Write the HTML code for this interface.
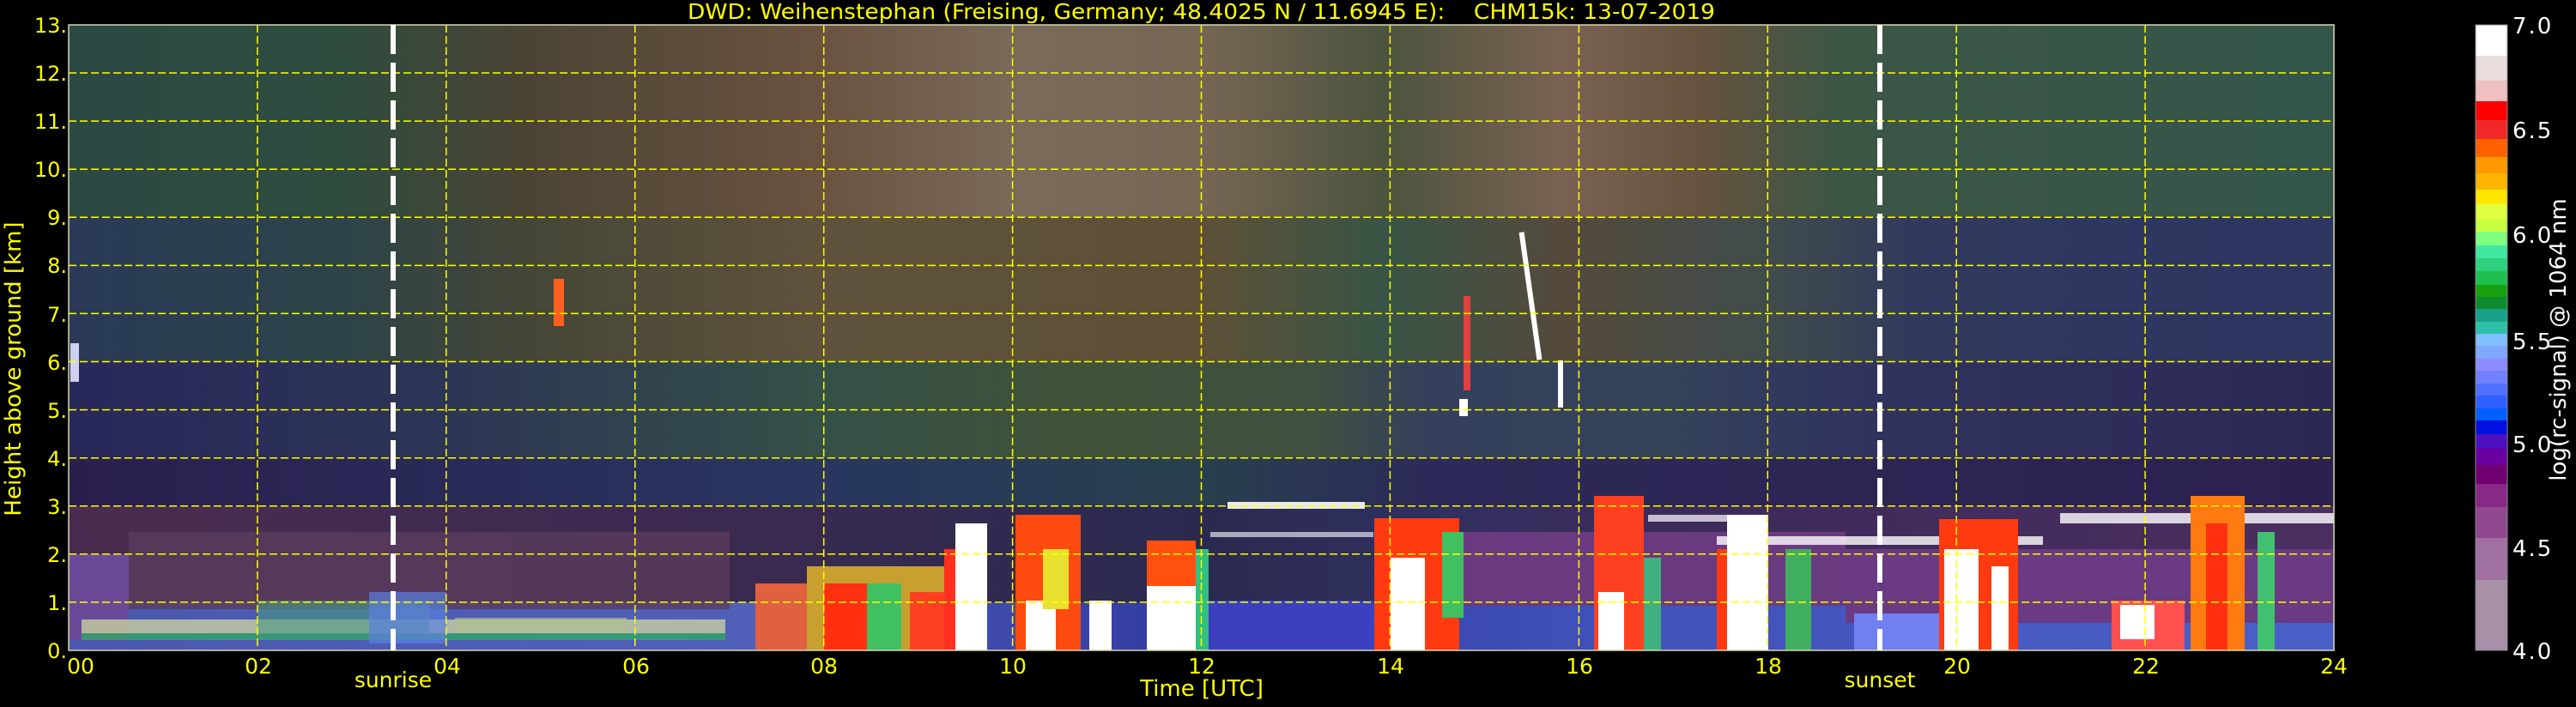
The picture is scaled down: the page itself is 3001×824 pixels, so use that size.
<!DOCTYPE html>
<html><head><meta charset="utf-8"><style>
html,body{margin:0;padding:0;background:#000;width:3001px;height:824px;overflow:hidden}
svg{display:block}
text{font-family:"DejaVu Sans","Liberation Sans",sans-serif;fill:#ffff00}
</style></head><body>
<svg width="3001" height="824" viewBox="0 0 3001 824" xmlns="http://www.w3.org/2000/svg">
<defs>
<linearGradient id="rA" gradientUnits="userSpaceOnUse" x1="80" y1="0" x2="2719" y2="0">
<stop offset="0" stop-color="#2c4a44"/><stop offset=".12" stop-color="#2e4c3e"/><stop offset=".2" stop-color="#4a4434"/><stop offset=".33" stop-color="#6a5240"/><stop offset=".42" stop-color="#7a6a5a"/><stop offset=".5" stop-color="#766654"/><stop offset=".58" stop-color="#4c543e"/><stop offset=".66" stop-color="#7a6252"/><stop offset=".72" stop-color="#66523e"/><stop offset=".78" stop-color="#3c5646"/><stop offset="1" stop-color="#34564a"/></linearGradient>
<linearGradient id="rB" gradientUnits="userSpaceOnUse" x1="80" y1="0" x2="2719" y2="0">
<stop offset="0" stop-color="#2a3a58"/><stop offset=".12" stop-color="#2c4448"/><stop offset=".2" stop-color="#444636"/><stop offset=".33" stop-color="#5e523c"/><stop offset=".5" stop-color="#5e5036"/><stop offset=".58" stop-color="#385446"/><stop offset=".66" stop-color="#544a3c"/><stop offset=".75" stop-color="#404c4c"/><stop offset=".82" stop-color="#30385e"/><stop offset="1" stop-color="#2c3660"/></linearGradient>
<linearGradient id="rC" gradientUnits="userSpaceOnUse" x1="80" y1="0" x2="2719" y2="0">
<stop offset="0" stop-color="#28285a"/><stop offset=".16" stop-color="#2c3456"/><stop offset=".33" stop-color="#345048"/><stop offset=".45" stop-color="#405238"/><stop offset=".55" stop-color="#3e5040"/><stop offset=".6" stop-color="#34405c"/><stop offset=".7" stop-color="#34445a"/><stop offset=".78" stop-color="#30345e"/><stop offset="1" stop-color="#2c2856"/></linearGradient>
<linearGradient id="rD" gradientUnits="userSpaceOnUse" x1="80" y1="0" x2="2719" y2="0">
<stop offset="0" stop-color="#2a1e4e"/><stop offset=".33" stop-color="#283660"/><stop offset=".5" stop-color="#28404e"/><stop offset=".6" stop-color="#2c2a58"/><stop offset="1" stop-color="#2c2050"/></linearGradient>
<linearGradient id="rE" gradientUnits="userSpaceOnUse" x1="80" y1="0" x2="2719" y2="0">
<stop offset="0" stop-color="#4a2c50"/><stop offset=".3" stop-color="#3a2a50"/><stop offset=".5" stop-color="#2a2a50"/><stop offset=".6" stop-color="#303060"/><stop offset=".7" stop-color="#3c2a5a"/><stop offset="1" stop-color="#4a2e60"/></linearGradient>
<linearGradient id="rF" gradientUnits="userSpaceOnUse" x1="80" y1="0" x2="2719" y2="0">
<stop offset="0" stop-color="#4a58b0"/><stop offset=".3" stop-color="#5060b8"/><stop offset=".5" stop-color="#3038a0"/><stop offset=".66" stop-color="#4050b8"/><stop offset="1" stop-color="#4a60c8"/></linearGradient>
</defs>

<rect x="80" y="29" width="2639" height="224" fill="url(#rA)"/>
<rect x="80" y="253" width="2639" height="169" fill="url(#rB)"/>
<rect x="80" y="422" width="2639" height="112" fill="url(#rC)"/>
<rect x="80" y="534" width="2639" height="56" fill="url(#rD)"/>
<rect x="80" y="590" width="2639" height="168" fill="url(#rE)"/>
<rect x="80" y="702" width="2639" height="56" fill="url(#rF)"/>

<rect x="150" y="620" width="700" height="90" fill="#5a3c5c" opacity=".8"/>
<rect x="80" y="646" width="70" height="100" fill="#6a4a98"/>
<rect x="95" y="722" width="750" height="16" fill="#c8d0a0" opacity=".8"/>
<rect x="95" y="738" width="750" height="8" fill="#30b060" opacity=".7"/>
<rect x="300" y="700" width="200" height="40" fill="#4a9a80" opacity=".6"/>
<rect x="430" y="690" width="90" height="60" fill="#5a80e0" opacity=".7"/>
<rect x="530" y="720" width="200" height="18" fill="#b0c090" opacity=".7"/>
<rect x="1630" y="620" width="520" height="86" fill="#6a3a80"/>
<rect x="2150" y="640" width="569" height="86" fill="#6a3a82"/>
<rect x="1400" y="700" width="200" height="58" fill="#3a40c0"/>
<rect x="1430" y="585" width="160" height="8" fill="#ffffff" opacity=".9"/>
<rect x="1410" y="620" width="190" height="6" fill="#ffffff" opacity=".6"/>
<rect x="2000" y="625" width="380" height="10" fill="#ffffff" opacity=".8"/>
<rect x="1920" y="600" width="100" height="8" fill="#ffffff" opacity=".7"/>
<rect x="2400" y="598" width="319" height="12" fill="#ffffff" opacity=".8"/>
<rect x="2160" y="715" width="120" height="43" fill="#7080f0"/>

<rect x="880" y="680" width="60" height="78" fill="#e06040"/>
<rect x="940" y="660" width="170" height="98" fill="#c8a030"/>
<rect x="960" y="680" width="50" height="78" fill="#ff3010"/>
<rect x="1010" y="680" width="40" height="78" fill="#40c060"/>
<rect x="1060" y="690" width="40" height="68" fill="#ff4020"/>
<rect x="1113" y="610" width="37" height="148" fill="#ffffff"/>
<rect x="1100" y="640" width="13" height="118" fill="#ff3020"/>
<rect x="1183" y="600" width="76" height="158" fill="#ff4a10"/>
<rect x="1195" y="700" width="35" height="58" fill="#ffffff"/>
<rect x="1215" y="640" width="30" height="70" fill="#e8e030"/>
<rect x="1269" y="700" width="26" height="58" fill="#ffffff"/>
<rect x="1336" y="630" width="57" height="53" fill="#ff5010"/>
<rect x="1336" y="683" width="57" height="75" fill="#ffffff"/>
<rect x="1393" y="640" width="15" height="118" fill="#30c080"/>
<rect x="1601" y="604" width="99" height="154" fill="#ff3a10"/>
<rect x="1620" y="650" width="40" height="108" fill="#ffffff"/>
<rect x="1680" y="620" width="25" height="100" fill="#40c060"/>
<rect x="1857" y="578" width="58" height="180" fill="#ff4020"/>
<rect x="1862" y="690" width="30" height="68" fill="#ffffff"/>
<rect x="1915" y="650" width="20" height="108" fill="#40b080"/>
<rect x="2012" y="600" width="48" height="158" fill="#ffffff"/>
<rect x="2000" y="640" width="12" height="118" fill="#ff3a10"/>
<rect x="2080" y="640" width="30" height="118" fill="#40b060"/>
<rect x="2259" y="605" width="92" height="153" fill="#ff3a10"/>
<rect x="2265" y="640" width="40" height="118" fill="#ffffff"/>
<rect x="2320" y="660" width="20" height="98" fill="#ffffff"/>
<rect x="2460" y="700" width="85" height="58" fill="#ff5050"/>
<rect x="2470" y="705" width="40" height="40" fill="#ffffff"/>
<rect x="2552" y="578" width="63" height="180" fill="#ff7a10"/>
<rect x="2570" y="610" width="25" height="148" fill="#ff3010"/>
<rect x="2630" y="620" width="20" height="138" fill="#40c070"/>

<rect x="645" y="325" width="12" height="55" fill="#ff6020"/>
<rect x="1705" y="345" width="8" height="110" fill="#e04040"/>
<rect x="1700" y="465" width="10" height="20" fill="#ffffff"/>
<rect x="1780" y="270" width="6" height="150" fill="#ffffff" transform="rotate(-8 1783 345)"/>
<rect x="1815" y="420" width="6" height="55" fill="#ffffff"/>
<rect x="82" y="400" width="10" height="45" fill="#d0d0f0"/>

<g stroke="#ffff00" stroke-width="1.5" stroke-dasharray="9 4" fill="none">
<line x1="80" y1="701.9" x2="2719" y2="701.9"/><line x1="80" y1="645.8" x2="2719" y2="645.8"/>
<line x1="80" y1="589.8" x2="2719" y2="589.8"/><line x1="80" y1="533.7" x2="2719" y2="533.7"/>
<line x1="80" y1="477.6" x2="2719" y2="477.6"/><line x1="80" y1="421.5" x2="2719" y2="421.5"/>
<line x1="80" y1="365.4" x2="2719" y2="365.4"/><line x1="80" y1="309.4" x2="2719" y2="309.4"/>
<line x1="80" y1="253.3" x2="2719" y2="253.3"/><line x1="80" y1="197.2" x2="2719" y2="197.2"/>
<line x1="80" y1="141.1" x2="2719" y2="141.1"/><line x1="80" y1="85" x2="2719" y2="85"/>
<line x1="299.9" y1="29" x2="299.9" y2="758"/><line x1="519.8" y1="29" x2="519.8" y2="758"/>
<line x1="739.8" y1="29" x2="739.8" y2="758"/><line x1="959.7" y1="29" x2="959.7" y2="758"/>
<line x1="1179.6" y1="29" x2="1179.6" y2="758"/><line x1="1399.5" y1="29" x2="1399.5" y2="758"/>
<line x1="1619.4" y1="29" x2="1619.4" y2="758"/><line x1="1839.4" y1="29" x2="1839.4" y2="758"/>
<line x1="2059.3" y1="29" x2="2059.3" y2="758"/><line x1="2279.2" y1="29" x2="2279.2" y2="758"/>
<line x1="2499.1" y1="29" x2="2499.1" y2="758"/>
</g>
<rect x="80" y="29" width="2639" height="729" fill="none" stroke="#d8d8b0" stroke-width="1.5"/>
<g stroke="#ffffff" stroke-width="6" stroke-dasharray="34 10">
<line x1="458" y1="29" x2="458" y2="758"/><line x1="2190" y1="29" x2="2190" y2="758"/>
</g>

<text x="801" y="22" font-size="25" textLength="1197" lengthAdjust="spacingAndGlyphs" xml:space="preserve">DWD: Weihenstephan (Freising, Germany; 48.4025 N / 11.6945 E):    CHM15k: 13-07-2019</text>

<g font-size="24" text-anchor="end">
<text x="78" y="767">0.</text><text x="78" y="711">1.</text><text x="78" y="655">2.</text>
<text x="78" y="599">3.</text><text x="78" y="543">4.</text><text x="78" y="487">5.</text>
<text x="78" y="431">6.</text><text x="78" y="375">7.</text><text x="78" y="318">8.</text>
<text x="78" y="262">9.</text><text x="78" y="206">10.</text><text x="78" y="150">11.</text>
<text x="78" y="94">12.</text><text x="78" y="38">13.</text>
</g>
<text transform="translate(24,430) rotate(-90)" font-size="26" text-anchor="middle">Height above ground [km]</text>

<g font-size="25" text-anchor="middle">
<text x="94" y="785">00</text><text x="301" y="785">02</text><text x="521" y="785">04</text>
<text x="741" y="785">06</text><text x="960" y="785">08</text><text x="1180" y="785">10</text>
<text x="1400" y="785">12</text><text x="1620" y="785">14</text><text x="1840" y="785">16</text>
<text x="2060" y="785">18</text><text x="2280" y="785">20</text><text x="2500" y="785">22</text>
<text x="2719" y="785">24</text>
</g>
<text x="458" y="801" font-size="25" text-anchor="middle">sunrise</text>
<text x="2190" y="801" font-size="25" text-anchor="middle">sunset</text>
<text x="1400" y="811" font-size="26" text-anchor="middle">Time [UTC]</text>

<g>
<rect x="2884" y="29" width="37" height="36" fill="#ffffff"/>
<rect x="2884" y="65" width="37" height="29" fill="#e8dcdc"/>
<rect x="2884" y="94" width="37" height="24" fill="#f0c0c0"/>
<rect x="2884" y="118" width="37" height="22" fill="#ff0000"/>
<rect x="2884" y="140" width="37" height="22" fill="#f02828"/>
<rect x="2884" y="162" width="37" height="21" fill="#ff6000"/>
<rect x="2884" y="183" width="37" height="19" fill="#ff9a00"/>
<rect x="2884" y="202" width="37" height="19" fill="#ffb400"/>
<rect x="2884" y="221" width="37" height="17" fill="#ffe600"/>
<rect x="2884" y="238" width="37" height="17" fill="#e0ff40"/>
<rect x="2884" y="255" width="37" height="15" fill="#c8ff40"/>
<rect x="2884" y="270" width="37" height="16" fill="#80ff80"/>
<rect x="2884" y="286" width="37" height="15" fill="#40e8a0"/>
<rect x="2884" y="301" width="37" height="15" fill="#30d080"/>
<rect x="2884" y="316" width="37" height="16" fill="#20c050"/>
<rect x="2884" y="332" width="37" height="14" fill="#18a010"/>
<rect x="2884" y="346" width="37" height="14" fill="#108a30"/>
<rect x="2884" y="360" width="37" height="15" fill="#18a088"/>
<rect x="2884" y="375" width="37" height="14" fill="#30c0a8"/>
<rect x="2884" y="389" width="37" height="14" fill="#80c0ff"/>
<rect x="2884" y="403" width="37" height="15" fill="#80a8ff"/>
<rect x="2884" y="418" width="37" height="14" fill="#8c8cff"/>
<rect x="2884" y="432" width="37" height="15" fill="#7080ff"/>
<rect x="2884" y="447" width="37" height="14" fill="#5070ff"/>
<rect x="2884" y="461" width="37" height="15" fill="#3060ff"/>
<rect x="2884" y="476" width="37" height="14" fill="#0060ff"/>
<rect x="2884" y="490" width="37" height="16" fill="#0010e0"/>
<rect x="2884" y="506" width="37" height="17" fill="#4a10c0"/>
<rect x="2884" y="523" width="37" height="19" fill="#6a00a0"/>
<rect x="2884" y="542" width="37" height="22" fill="#700070"/>
<rect x="2884" y="564" width="37" height="27" fill="#8a2888"/>
<rect x="2884" y="591" width="37" height="36" fill="#904890"/>
<rect x="2884" y="627" width="37" height="49" fill="#a070a0"/>
<rect x="2884" y="676" width="37" height="82" fill="#a890a8"/>
<rect x="2884" y="29" width="37" height="729" fill="none" stroke="#888" stroke-width="1"/>
</g>
<g font-size="26" letter-spacing="2">
<text x="2927" y="39" style="fill:#fff">7.0</text>
<text x="2927" y="161" style="fill:#fff">6.5</text>
<text x="2927" y="283" style="fill:#fff">6.0</text>
<text x="2927" y="407" style="fill:#fff">5.5</text>
<text x="2927" y="527" style="fill:#fff">5.0</text>
<text x="2927" y="648" style="fill:#fff">4.5</text>
<text x="2927" y="768" style="fill:#fff">4.0</text>
</g>
<text transform="translate(2989,396) rotate(-90)" font-size="26" text-anchor="middle" style="fill:#fff">log(rc-signal) @ 1064 nm</text>
</svg>
</body></html>
